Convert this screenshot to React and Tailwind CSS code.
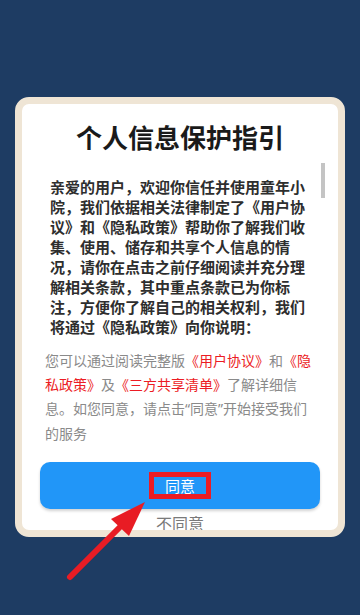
const Arrow = () => (
  <svg className="absolute left-0 top-0 pointer-events-none" width="360" height="615" viewBox="0 0 360 615">
    <line x1="70" y1="577" x2="124" y2="523" stroke="#e81c24" strokeWidth="6" strokeLinecap="round" />
    <polygon points="145,502 111,519 129,536" fill="#e81c24" />
  </svg>
);

const Red = ({ children }) => <span className="text-[#ec1c24]">{children}</span>;

const Q = ({ children }) => (
  <span style={{ fontFamily: '"Noto Sans", "Liberation Sans", sans-serif' }}>{children}</span>
);

const App = () => {
  return (
    <div
      className="relative w-[360px] h-[615px] overflow-hidden bg-[#1e3c63] pt-[97px] px-[15px]"
      style={{ fontFamily: '"Noto Sans CJK SC", "Noto Sans", sans-serif' }}
    >
      <div className="w-[330px] h-[440px] border-[7px] border-[#efe5d5] rounded-[14px] bg-white overflow-hidden px-[18px] flex flex-col">
        <h1 className="pt-[17px] text-center text-[26px] leading-[32px] font-bold text-[#1a1a1a]">
          个人信息保护指引
        </h1>

        <div className="mt-[10px] ml-[10px] mr-[-5px] flex">
          <p className="w-[262px] pt-[14px] text-[15px] leading-[20px] font-bold text-[#2e2e2e]">
            亲爱的用户，欢迎你信任并使用童年小院，我们依据相关法律制定了《用户协议》和《隐私政策》帮助你了解我们收集、使用、储存和共享个人信息的情况，请你在点击之前仔细阅读并充分理解相关条款，其中重点条款已为你标注，方便你了解自己的相关权利，我们将通过《隐私政策》向你说明：
          </p>
          <div className="ml-auto w-[4px]">
            <div className="h-[35px] w-[4px] bg-[#c4c4c4]"></div>
          </div>
        </div>

        <p className="mt-[11px] ml-[5px] w-[272px] text-[14px] leading-[24px] text-[#8a8a8a]">
          您可以通过阅读完整版<Red>《用户协议》</Red>和<Red>《隐私政策》</Red>及<Red>《三方共享清单》</Red>了解详细信息。如您同意，请点击<Q>“</Q>同意<Q>”</Q>开始接受我们的服务
        </p>

        <button className="mt-[17px] h-[47px] w-full shrink-0 rounded-[10px] bg-[#2196f8] shadow-[0_2px_3px_rgba(0,0,0,0.18)] flex items-center justify-center">
          <span className="border-[5px] border-[#ec1c24] px-[11px] text-[15px] leading-[17px] text-white">同意</span>
        </button>

        <div className="mt-[5px] text-center text-[16px] leading-[18px] text-[#7a7a7a]">不同意</div>
      </div>
      <Arrow />
    </div>
  );
};

export default App;
